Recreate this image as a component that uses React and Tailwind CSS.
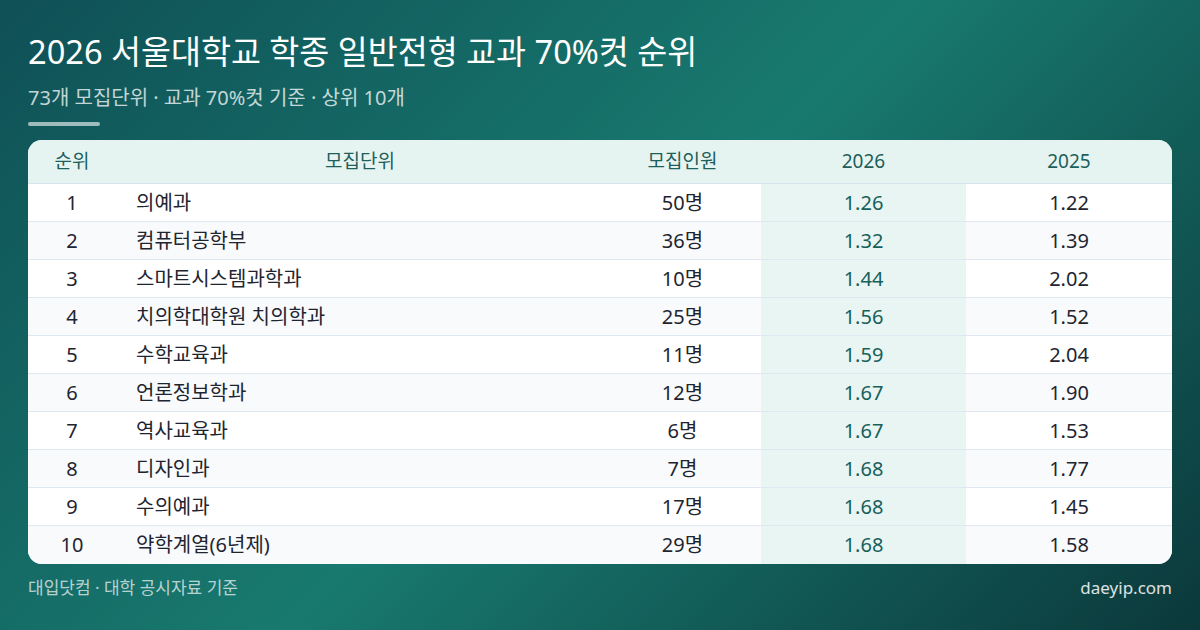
import React from "react";

const rows = [
  [1, "의예과", "50명", "1.26", "1.22"],
  [2, "컴퓨터공학부", "36명", "1.32", "1.39"],
  [3, "스마트시스템과학과", "10명", "1.44", "2.02"],
  [4, "치의학대학원 치의학과", "25명", "1.56", "1.52"],
  [5, "수학교육과", "11명", "1.59", "2.04"],
  [6, "언론정보학과", "12명", "1.67", "1.90"],
  [7, "역사교육과", "6명", "1.67", "1.53"],
  [8, "디자인과", "7명", "1.68", "1.77"],
  [9, "수의예과", "17명", "1.68", "1.45"],
  [10, "약학계열(6년제)", "29명", "1.68", "1.58"],
];

export default function App() {
  return (
    <div
      className="w-[1200px] h-[630px] overflow-hidden bg-[linear-gradient(135deg,#0f5056_0%,#187a6f_50%,#0b383b_100%)] px-[28px] flex flex-col"
      style={{ fontFamily: '"Noto Sans", "Noto Sans CJK KR", sans-serif' }}
    >
      <h1 className="mt-[31px] text-[32.6px] leading-[42px] text-white font-normal">
        2026 서울대학교 학종 일반전형 교과 70%컷 순위
      </h1>
      <p className="mt-[13px] text-[20px] leading-[24px] text-white/75">
        73개 모집단위 · 교과 70%컷 기준 · 상위 10개
      </p>
      <div className="mt-[12px] w-[72px] h-[4px] rounded-full bg-white/60" />
      <div className="mt-[14px] rounded-[14px] overflow-hidden bg-white">
        <div className="grid grid-cols-[88px_488px_157px_205px_206px] h-[44px] items-center bg-[#e6f4f1] text-[#1d5f5b] text-[19px] border-b border-[#dbe4ec]">
          <div className="text-center">순위</div>
          <div className="text-center">모집단위</div>
          <div className="text-center">모집인원</div>
          <div className="text-center">2026</div>
          <div className="text-center">2025</div>
        </div>
        {rows.map((r, i) => (
          <div
            key={r[0]}
            className={`grid grid-cols-[88px_488px_157px_205px_206px] h-[38px] items-stretch text-[20px] text-[#1f2530] ${
              i % 2 === 1 ? "bg-[#f8fafc]" : "bg-white"
            } ${i < rows.length - 1 ? "border-b border-[#dfe7ef]" : ""}`}
          >
            <div className="flex items-center justify-center">{r[0]}</div>
            <div className="flex items-center pl-[20px]">{r[1]}</div>
            <div className="flex items-center justify-center">{r[2]}</div>
            <div className="flex items-center justify-center bg-[#e8f5f2] text-[#17605b]">{r[3]}</div>
            <div className="flex items-center justify-center">{r[4]}</div>
          </div>
        ))}
      </div>
      <div className="mt-[13px] flex justify-between text-[17px] leading-[22px] text-white/70">
        <span>대입닷컴 · 대학 공시자료 기준</span>
        <span className="text-white/85">daeyip.com</span>
      </div>
    </div>
  );
}
